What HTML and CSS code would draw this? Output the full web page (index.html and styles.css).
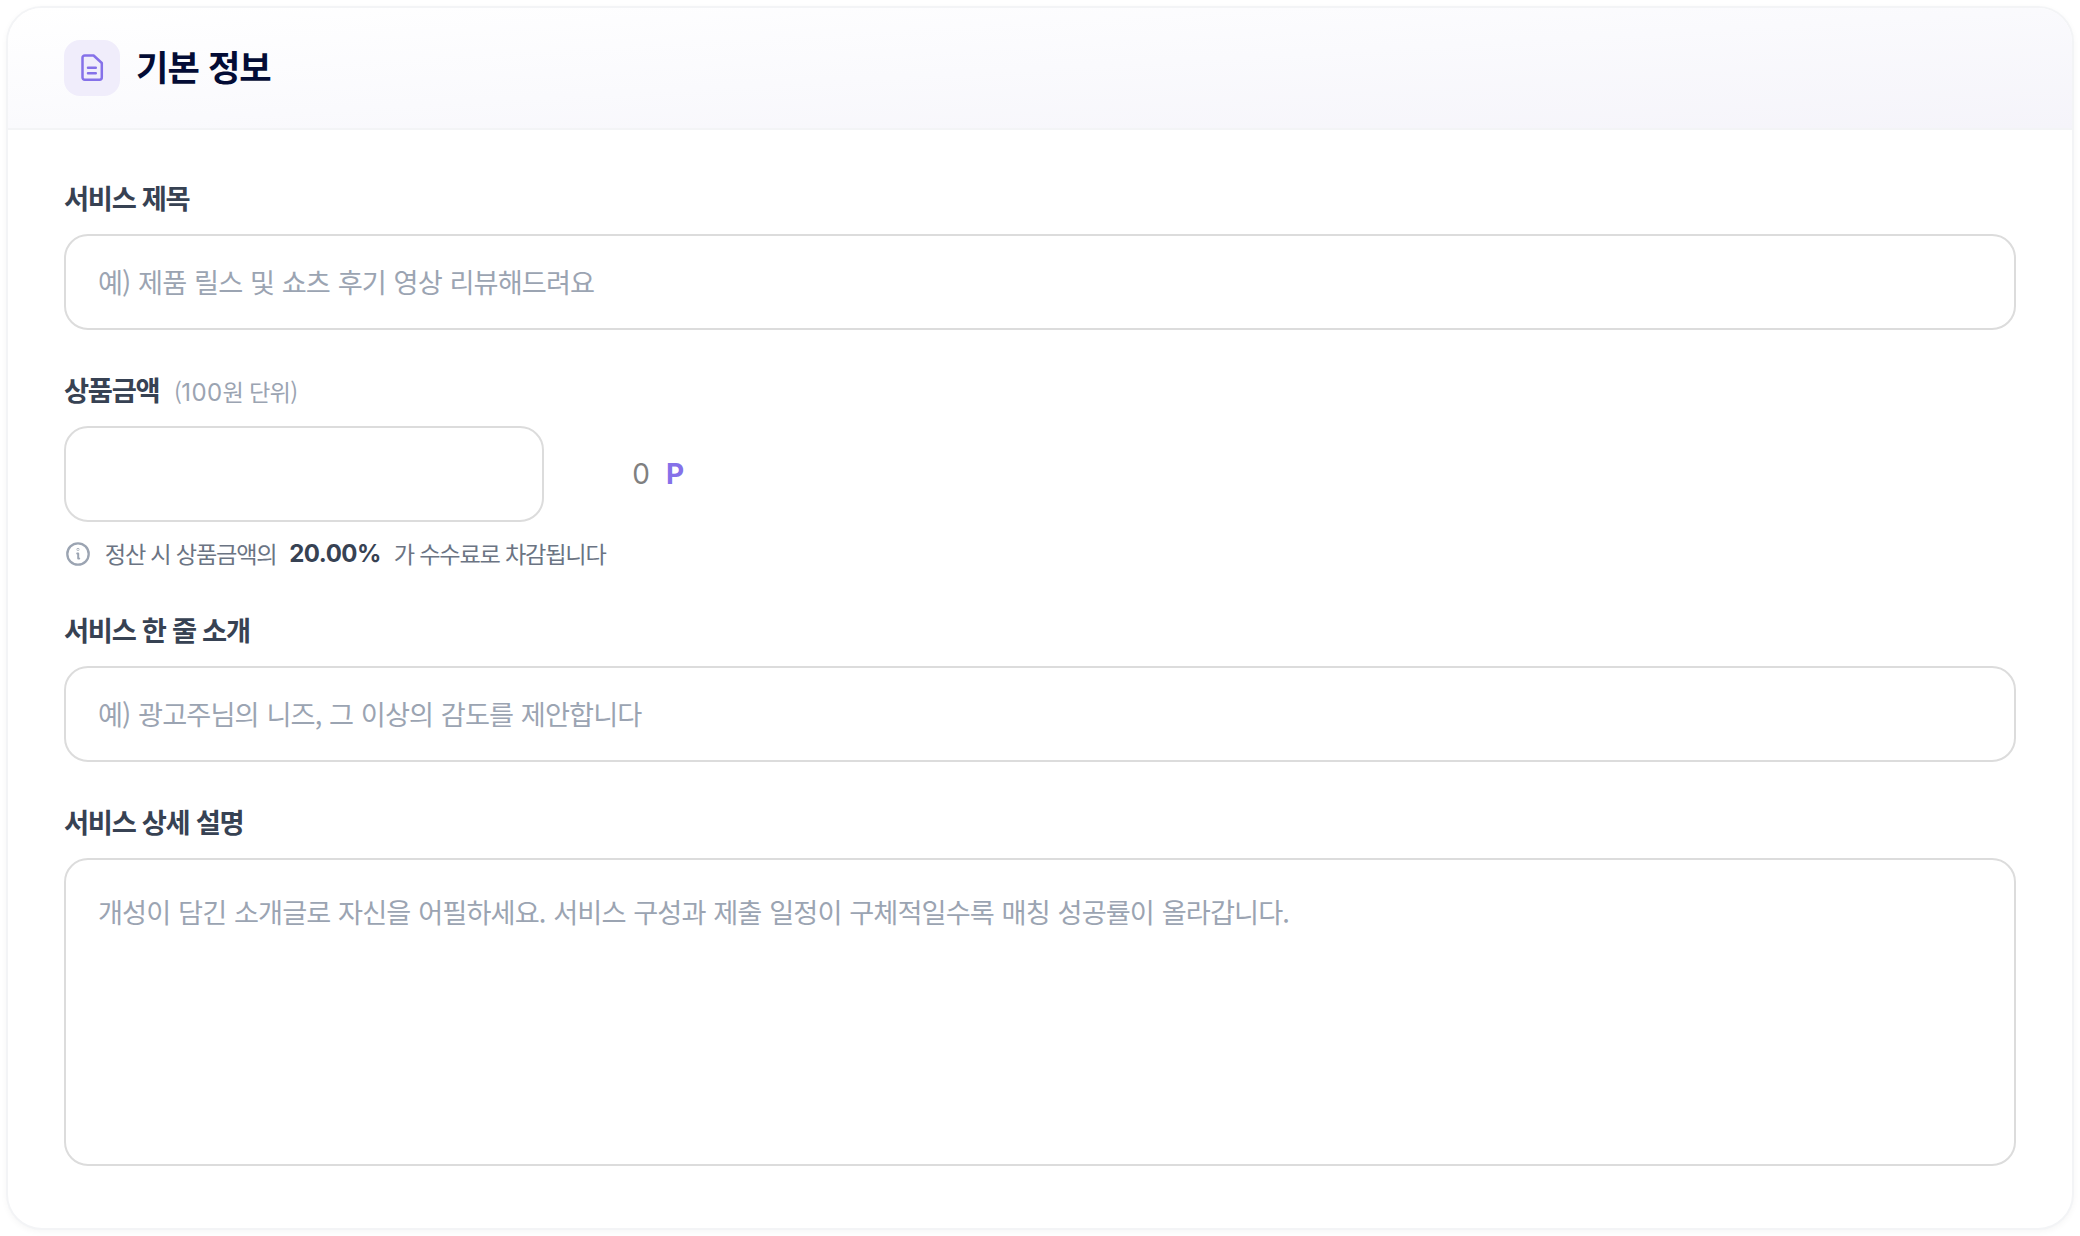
FILE: index.html
```html
<!DOCTYPE html>
<html lang="ko">
<head>
    <meta charset="UTF-8">
    <meta name="viewport" content="width=device-width, initial-scale=1.0">
    <title>기본 정보</title>
    <link rel="stylesheet" href="styles.css">
</head>
<body>
    <section class="card">
        <header class="card-header">
            <span class="card-icon">
                <svg width="32" height="32" viewBox="0 0 32 32" fill="none" stroke="currentColor" stroke-width="2.5" stroke-linecap="round" stroke-linejoin="round">
                    <path d="M8.7 3.5H17.6L25.8 11V25.6A2.2 2.2 0 0 1 23.6 27.8H8.7A2.2 2.2 0 0 1 6.5 25.6V5.7A2.2 2.2 0 0 1 8.7 3.5Z"/>
                    <path d="M12 15.8H19.8M12 21.2H19.8"/>
                </svg>
            </span>
            <h2 class="card-title">기본 정보</h2>
        </header>
        <form class="card-body">
            <div class="field">
                <label class="label" for="title">서비스 제목</label>
                <input class="input" id="title" type="text" placeholder="예) 제품 릴스 및 쇼츠 후기 영상 리뷰해드려요">
            </div>
            <div class="field">
                <label class="label" for="price">상품금액 <span class="label-sub">(<span class="num">100</span>원 단위)</span></label>
                <div class="price-row">
                    <input class="input price-input" id="price" type="text">
                    <span class="price-value">0</span>
                    <span class="price-unit">P</span>
                </div>
                <p class="hint">
                    <svg class="hint-icon" width="28" height="28" viewBox="0 0 28 28" fill="none" stroke="currentColor" stroke-width="2.3" stroke-linecap="round" stroke-linejoin="round">
                        <circle cx="14" cy="14" r="10.7"/>
                        <path stroke-width="2" d="M13.2 13.4H14.2V18.6M14.2 18.6H15.2"/>
                        <circle cx="14" cy="9.5" r="0.3"/>
                    </svg>
                    <span class="hint-text">정산 시 상품금액의</span>
                    <strong class="rate">20.00%</strong>
                    <span class="hint-text">가 수수료로 차감됩니다</span>
                </p>
            </div>
            <div class="field">
                <label class="label" for="summary">서비스 한 줄 소개</label>
                <input class="input" id="summary" type="text" placeholder="예) 광고주님의 니즈, 그 이상의 감도를 제안합니다">
            </div>
            <div class="field">
                <label class="label" for="detail">서비스 상세 설명</label>
                <textarea class="input textarea" id="detail" placeholder="개성이 담긴 소개글로 자신을 어필하세요. 서비스 구성과 제출 일정이 구체적일수록 매칭 성공률이 올라갑니다."></textarea>
            </div>
        </form>
    </section>
</body>
</html>
```
FILE: styles.css
```css
* {
    box-sizing: border-box;
}
body {
    margin: 0;
    padding: 6px;
    background: #fff;
    font-family: "Noto Sans CJK KR", "Inter", sans-serif;
    color: #374253;
}
.card {
    height: 1224px;
    border: 2px solid #f3f4f6;
    border-radius: 36px;
    background: #fff;
    box-shadow: 0 2px 6px rgba(0, 0, 0, 0.04);
    overflow: hidden;
}
.card-header {
    display: flex;
    align-items: center;
    gap: 16px;
    padding: 32px 56px;
    border-bottom: 2px solid #f3f4f6;
    background: linear-gradient(to bottom right, #fff 0%, #fafafd 50%, #f5f4fa 100%);
}
.card-icon {
    display: flex;
    align-items: center;
    justify-content: center;
    width: 56px;
    height: 56px;
    border-radius: 16px;
    background: #f0edfb;
    color: #8571e9;
}
.card-title {
    margin: 0;
    padding-bottom: 4px;
    font-size: 35.2px;
    line-height: 52px;
    font-weight: 700;
    letter-spacing: -0.9px;
    color: #030c35;
}
.card-body {
    display: flex;
    flex-direction: column;
    gap: 40px;
    padding: 48px 56px 62px;
}
.field {
    display: flex;
    flex-direction: column;
}
.label {
    height: 38px;
    margin-bottom: 18px;
    font-size: 27.3px;
    line-height: 38px;
    font-weight: 700;
    letter-spacing: -1.3px;
    color: #374253;
}
.label-sub {
    margin-left: 8.5px;
    font-size: 23.2px;
    font-weight: 400;
    letter-spacing: -0.7px;
    color: #9ba4b2;
}
.num {
    font-family: "Inter", sans-serif;
    font-size: 24px;
    letter-spacing: 0.4px;
}
.input {
    width: 100%;
    height: 96px;
    padding: 0 32px 2px;
    border: 2px solid #dcdcdc;
    border-radius: 24px;
    background: #fff;
    font-family: inherit;
    font-size: 27.2px;
    letter-spacing: -0.89px;
    word-spacing: 0.95px;
    color: #374253;
    outline: none;
}
.input::placeholder {
    color: #9ba4b2;
    opacity: 1;
}
.textarea {
    display: block;
    height: 308px;
    padding: 30px 32px;
    line-height: 42px;
    resize: none;
}
.price-row {
    display: flex;
    align-items: center;
    font-family: "Inter", sans-serif;
}
.price-input {
    width: 480px;
}
.price-value {
    width: 106px;
    text-align: right;
    font-size: 28px;
    color: #808080;
}
.price-unit {
    margin-left: 16px;
    font-size: 28px;
    font-weight: 700;
    color: #8571e9;
}
.hint {
    display: flex;
    align-items: center;
    gap: 12.8px;
    height: 32px;
    margin: 16px 0 0;
    font-size: 23.2px;
    line-height: 32px;
    letter-spacing: -1.2px;
    color: #6b7483;
}
.hint-icon {
    color: #9ba4b2;
}
.hint-text {
    padding-bottom: 3px;
}
.rate {
    font-family: "Inter", sans-serif;
    font-size: 24px;
    font-weight: 700;
    letter-spacing: -0.5px;
    color: #374253;
}
```
